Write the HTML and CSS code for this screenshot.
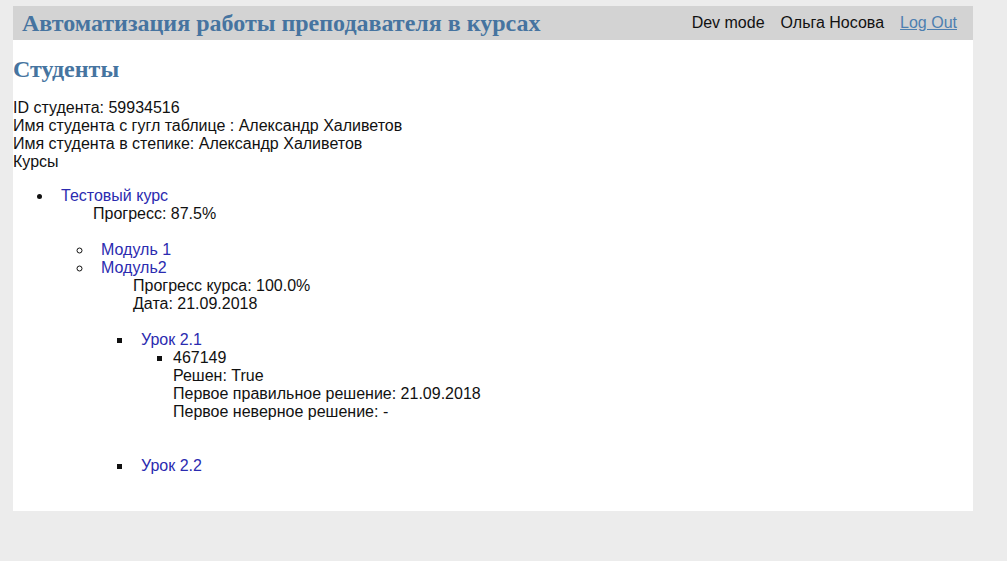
FILE: index.html
```html
<!DOCTYPE html>
<html lang="ru">
<head>
<meta charset="utf-8">
<title>Студенты</title>
<link rel="stylesheet" href="styles.css">
</head>
<body>
<div class="page">
  <header class="topbar">
    <h1 class="brand">Автоматизация работы преподавателя в курсах</h1>
    <nav class="usernav">
      <span>Dev mode</span>
      <span>Ольга Носова</span>
      <a class="logout" href="#">Log Out</a>
    </nav>
  </header>
  <main class="content">
    <h2 class="title">Студенты</h2>
    <div>ID студента: 59934516</div>
    <div>Имя студента с гугл таблице : Александр Халиветов</div>
    <div>Имя студента в степике: Александр Халиветов</div>
    <div>Курсы</div>
    <ul class="courses">
      <li>
        <a class="link" href="#">Тестовый курс</a>
        <div class="info">Прогресс: 87.5%</div>
        <ul class="modules">
          <li><a class="link" href="#">Модуль 1</a></li>
          <li>
            <a class="link" href="#">Модуль2</a>
            <div class="info">Прогресс курса: 100.0%<br>Дата: 21.09.2018</div>
            <ul class="lessons">
              <li>
                <a class="link" href="#">Урок 2.1</a>
                <ul class="steps">
                  <li>467149<br>Решен: True<br>Первое правильное решение: 21.09.2018<br>Первое неверное решение: -</li>
                </ul>
              </li>
              <li><a class="link" href="#">Урок 2.2</a></li>
            </ul>
          </li>
        </ul>
      </li>
    </ul>
  </main>
</div>
</body>
</html>
```
FILE: styles.css
```css
html, body {
  margin: 0;
  padding: 0;
  background: #ececec;
}
body {
  font-family: "Liberation Sans", Arial, sans-serif;
  font-size: 16px;
  color: #111;
}
.page {
  width: 960px;
  margin: 6px 0 0 13px;
  background: #fff;
  padding-bottom: 20px;
}
.topbar {
  display: flex;
  align-items: center;
  justify-content: space-between;
  height: 34px;
  background: #d3d3d3;
  padding: 0 16px 0 9px;
}
.brand {
  margin: 0;
  font-family: "Liberation Serif", "Times New Roman", serif;
  font-size: 24px;
  font-weight: bold;
  color: #4674a0;
}
.usernav {
  display: flex;
  gap: 16px;
  color: #111;
}
.logout {
  color: #4d7fb0;
  text-decoration: underline;
}
.content {
  padding-top: 16px;
}
.title {
  margin: 0 0 16px 0;
  font-family: "Liberation Serif", "Times New Roman", serif;
  font-size: 24px;
  font-weight: bold;
  color: #4674a0;
}
.link {
  margin-left: 8px;
  color: #2b2bb0;
  text-decoration: none;
}
.info {
  padding-left: 40px;
  margin-bottom: 18px;
}
.courses {
  margin: 16px 0 16px 0;
  padding-left: 40px;
  list-style: disc;
}
.modules {
  margin: 0;
  padding-left: 40px;
  list-style: circle;
}
.lessons {
  margin: 0;
  padding-left: 40px;
  list-style: square;
}
.steps {
  margin: 0 0 36px 0;
  padding-left: 40px;
  list-style: square;
}
```
